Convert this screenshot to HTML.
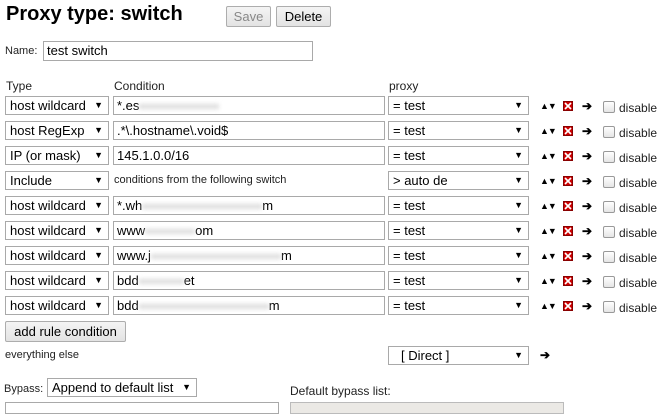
<!DOCTYPE html>
<html><head><style>
body{margin:0;width:662px;height:409px;overflow:hidden;background:#fff;font-family:"Liberation Sans",Arial,sans-serif;position:relative;color:#000}
.a{position:absolute}
.sel{position:absolute;height:19px;border:1px solid #a9a9a9;box-sizing:border-box;font-size:13px;line-height:17px;padding-left:4px;background:#fff;white-space:nowrap;overflow:hidden}
.sel:after{content:"▼";position:absolute;right:5px;top:0;font-size:9px}
.inp{position:absolute;height:19px;border:1px solid #a9a9a9;box-sizing:border-box;font-size:13px;line-height:17px;padding-left:3px;background:#fff;white-space:nowrap}
.lbl{position:absolute;font-size:12px;color:#222}
.btn{position:absolute;border:1px solid #adadad;background:linear-gradient(#f4f4f4,#e3e3e3);box-sizing:border-box;font-size:13px;text-align:center;border-radius:2px}
.blur{display:inline-block;height:5px;background:#ddd;filter:blur(2px);vertical-align:middle}
.ic{position:absolute;font-size:11px}
.x{position:absolute;width:10px;height:10px;background:#c00;box-sizing:border-box;border:1px solid #800}
.x svg{display:block}
.cb{position:absolute;width:12px;height:12px;border:1px solid #999;border-radius:2px;background:linear-gradient(#fff,#e5e5e5);box-sizing:border-box}
</style></head><body>
<div class="a" style="left:6px;top:3px;font-size:20px;font-weight:bold">Proxy type: switch</div>
<div class="btn" style="left:226px;top:6px;width:45px;height:21px;color:#888;line-height:19px">Save</div>
<div class="btn" style="left:276px;top:6px;width:55px;height:21px;line-height:19px">Delete</div>
<div class="lbl" style="left:5px;top:45px;font-size:11px">Name:</div>
<div class="inp" style="left:43px;top:41px;width:270px;height:20px;font-size:13px">test switch</div>
<div class="lbl" style="left:6px;top:79px">Type</div>
<div class="lbl" style="left:114px;top:79px">Condition</div>
<div class="lbl" style="left:389px;top:79px">proxy</div>

<div id="rows"></div>
<script>
var rows=[["host wildcard",'*.es<span class="blur" style="width:80px"></span>',"= test"],
["host RegExp",".*\\.hostname\\.void$","= test"],
["IP (or mask)","145.1.0.0/16","= test"],
["Include",null,"&gt; auto de"],
["host wildcard",'*.wh<span class="blur" style="width:120px"></span>m',"= test"],
["host wildcard",'www<span class="blur" style="width:50px"></span>om',"= test"],
["host wildcard",'www.j<span class="blur" style="width:130px"></span>m',"= test"],
["host wildcard",'bdd<span class="blur" style="width:45px"></span>et',"= test"],
["host wildcard",'bdd<span class="blur" style="width:130px"></span>m',"= test"]];
var h="";
rows.forEach(function(r,i){var y=96+i*25;
h+='<div class="sel" style="left:5px;top:'+y+'px;width:104px">'+r[0]+'</div>';
if(r[1]===null)h+='<div class="lbl" style="left:114px;top:'+(y+3)+'px;font-size:11px">conditions from the following switch</div>';
else h+='<div class="inp" style="left:113px;top:'+y+'px;width:272px">'+r[1]+'</div>';
h+='<div class="sel" style="left:388px;top:'+y+'px;width:141px">'+r[2]+'</div>';
h+='<div class="ic" style="left:540px;top:'+(y+5)+'px;font-size:9px;letter-spacing:-1px">▲▼</div>';
h+='<div class="x" style="left:563px;top:'+(y+5)+'px"><svg width="8" height="8"><path d="M1 1L7 7M7 1L1 7" stroke="#fff" stroke-width="1.6"/></svg></div>';
h+='<div class="ic" style="left:582px;top:'+(y+3)+'px;font-size:12px;font-weight:bold">➔</div>';
h+='<div class="cb" style="left:603px;top:'+(y+5)+'px"></div>';
h+='<div class="lbl" style="left:619px;top:'+(y+5)+'px;font-size:12px">disable</div>';});
document.getElementById("rows").innerHTML=h;
</script>
<div class="btn" style="left:5px;top:321px;width:121px;height:21px;line-height:19px">add rule condition</div>
<div class="lbl" style="left:5px;top:349px;font-size:11px">everything else</div>
<div class="sel" style="left:388px;top:346px;width:141px;padding-left:12px">[ Direct ]</div>
<div class="ic" style="left:540px;top:348px;font-size:12px;font-weight:bold">➔</div>
<div class="lbl" style="left:4px;top:383px;font-size:11px">Bypass:</div>
<div class="sel" style="left:47px;top:378px;width:150px">Append to default list</div>
<div class="lbl" style="left:290px;top:384px">Default bypass list:</div>
<div class="a" style="left:5px;top:402px;width:272px;height:10px;border:1px solid #a9a9a9"></div>
<div class="a" style="left:290px;top:402px;width:272px;height:10px;border:1px solid #bbb;background:#ebe9e5"></div>
</body></html>
